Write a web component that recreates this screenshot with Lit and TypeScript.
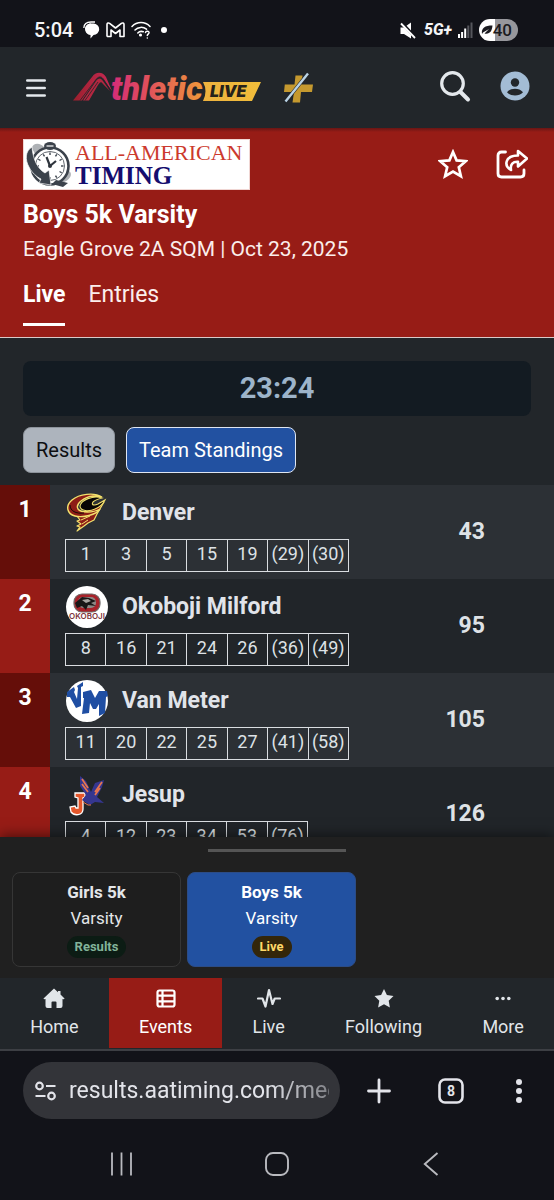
import { LitElement, html, css, svg } from "lit";
import { customElement, state } from "lit/decorators.js";

interface Team {
  rank: number;
  name: string;
  places: string[];
  score: number;
}

const TEAMS: Team[] = [
  { rank: 1, name: "Denver", places: ["1", "3", "5", "15", "19", "(29)", "(30)"], score: 43 },
  { rank: 2, name: "Okoboji Milford", places: ["8", "16", "21", "24", "26", "(36)", "(49)"], score: 95 },
  { rank: 3, name: "Van Meter", places: ["11", "20", "22", "25", "27", "(41)", "(58)"], score: 105 },
  { rank: 4, name: "Jesup", places: ["4", "12", "23", "34", "53", "(76)"], score: 126 },
];

const CELL = 40.5;

const logos: Record<string, unknown> = {
  Denver: svg`
    <path d="M11 24 L14 28 L11 29 L15 32 L11 34 L14 35 L11 39 L18 34 L22 31 L28 28 L31 22 L38 10 L28 16 Z" fill="#8d1d16" stroke="#f3e06c" stroke-width="1.2" stroke-linejoin="round"/>
    <path d="M36 5 C28 0 13 2 6 8 C-1 14 1 22 9 24 C17 26 30 23 34 17 C27 21 15 21 12 17 C9 12 18 5 27 4 C30 4 33 4 36 5 Z" fill="#8d1d16" stroke="#f3e06c" stroke-width="1.4"/>
    <path d="M36 6 C27 3 15 8 14 14 C14 19 23 20 29 17 C34 15 37 12 39 8 L32 12 C28 14 25 13 27 10 C29 8 32 7 36 6 Z" fill="#080404" stroke="#f3e06c" stroke-width="1.1"/>
    <path d="M4 13 C4 19 10 22 18 21" fill="none" stroke="#1b0a06" stroke-width="1"/>
    <path d="M15 28 L24 24 M16 32 L22 28" stroke="#f3e06c" stroke-width="1"/>`,
  "Okoboji Milford": svg`
    <circle cx="21" cy="21" r="21" fill="#fff"/>
    <rect x="8" y="8" width="26" height="18" rx="8" fill="#a8222a" stroke="#6f6a68" stroke-width="1.2"/>
    <rect x="12" y="11" width="18" height="11" rx="5" fill="#8d8885"/>
    <path d="M9 17 L16 11 L23 12 L30 15 L25 17 L30 20 L22 19 L20 24 L16 20 L11 22 Z" fill="#191616"/>
    <path d="M16 14 L22 13 L25 15 L20 17Z" fill="#a8a4a0"/>
    <text x="21" y="33" text-anchor="middle" font-family="Inter, sans-serif" font-size="8" font-weight="600" fill="#7d333a">OKOBOJI</text>`,
  "Van Meter": svg`
    <circle cx="21" cy="21" r="21" fill="#fff"/>
    <path d="M1 12 L8 7 L9 10 L8 12 L11 19 L12 8 L11 6 L17 2 L17 6 L15 7 L15 26 L10 28 L4 17 L1 17 Z" fill="#1f4ea3"/>
    <path d="M17 12 L25 10 L29 18 L33 11 L41 11 L42 16 L40 17 L39 33 L33 36 L33 24 L30 29 L27 29 L24 23 L23 33 L16 34 L18 18 L17 18 Z" fill="#1f4ea3"/>`,
  Jesup: svg`
    <path d="M9 19 L19 19 L19 23 L17 24 L17 35 C17 42 8 42 5 38 L4 33 L9 32 L10 34 L12 34 L12 24 L9 23 Z" fill="#e4572b" stroke="#fff" stroke-width="1.300"/>
    <path d="M14 2 L20 7 L25 18 L29 9 L38 6 L36 13 L31 23 L38 29 L29 28 L24 31 L19 28 L16 26 L20 21 L14 12 Z" fill="#35368f"/>
    <path d="M16 5 L22 14 M36 8 L29 18 M16 10 L22 18 M34 14 L29 21" stroke="#e8764f" stroke-width="1.700"/>
    <path d="M17 28 L22 31 L25 31" fill="none" stroke="#e8764f"/>`,
};

@customElement("team-logo")
class TeamLogo extends LitElement {
  static properties = { name: {} };
  declare name: string;
  static styles = css`
    :host { display: block; width: 42px; height: 42px; flex: none; }
    svg { display: block; width: 100%; height: 100%; }
  `;
  render() {
    return html`<svg viewBox="0 0 42 42" aria-hidden="true">${logos[this.name]}</svg>`;
  }
}

@customElement("status-bar")
class StatusBar extends LitElement {
  static styles = css`
    :host { display: flex; align-items: center; height: 47px; padding: 13px 36px 0 34px; box-sizing: border-box; color: #f4f5f7; }
    svg { display: block; flex: none; }
    .time { font-size: 20px; font-weight: 500; line-height: 24px; margin-right: 10px; }
    .icons { display: flex; align-items: center; gap: 6px; flex: 1; }
    .dot { width: 6px; height: 6px; border-radius: 50%; background: #fff; margin-left: 4px; }
    .net { font-size: 16px; font-weight: 800; font-style: italic; line-height: 20px; margin: 0 6px 0 8px; }
    .battery { display: flex; align-items: center; justify-content: flex-end; width: 39px; height: 22px; margin-left: 6px; border-radius: 11px; background: linear-gradient(90deg, #fff 40%, #97979c 40%); color: #1b1b20; font-size: 17px; font-weight: 500; padding: 0 6px 0 3px; box-sizing: border-box; }
  `;
  render() {
    return html`
      <span class="time">5:04</span>
      <div class="icons">
        <svg width="17" height="18" viewBox="0 0 17 18"><path d="M7.500 2.500h3a5.700 5.700 0 0 1 0 11.400L7.500 17.500V14A5.800 5.800 0 0 1 7.500 2.500Z" fill="#fff"/><path d="M7 13.500C4 12.500 2 10.500 2 7.800S4.500 2.500 8 2.500Z" fill="#fff"/><path d="M.8 7C1 3 4 1 8 1h4" fill="none" stroke="#fff" stroke-width="1.300"/></svg>
        <svg width="19" height="16" viewBox="0 0 19 16"><path d="M1 14V2.500C1 1 2.500.6 3.600 1.400L9.500 6l5.900-4.600C16.500.6 18 1 18 2.500V14.500h-4V8l-4.500 3.500L5 8v6.500H1.500Z" fill="none" stroke="#fff" stroke-width="1.600" stroke-linejoin="round"/></svg>
        <svg width="20" height="18" viewBox="0 0 20 18" fill="none" stroke="#fff" stroke-width="1.500" stroke-linecap="round"><path d="M1 5.500C6 .2 14 .2 19 5.500M4 9c3-3.200 8-3.500 11.500-.8M6.800 12c1.500-1.600 3.500-2 5.500-1.200"/><circle cx="9.500" cy="14" r=".8"/><path d="M14.500 11.500c.3-2 3.800-1.700 3.500.4-.2 1.200-1.700 1.300-1.700 2.600M16.300 17v.1"/></svg>
        <i class="dot"></i>
      </div>
      <svg width="16" height="17" viewBox="0 0 16 17"><path d="M.5 5.500h3.500L11 .5v16L4 12H.5Z" fill="#fff"/><path d="M1 0l15 16" stroke="#121319" stroke-width="3"/><path d="M1 1.500l14 14.500" stroke="#fff" stroke-width="1.800"/></svg>
      <span class="net">5G+</span>
      <svg width="15" height="16" viewBox="0 0 15 16"><path d="M0 12h2v4H0ZM3.100 10h2v6h-2ZM6.200 6.500h2V16h-2Z" fill="#fff"/><path d="M9.300 3.500h2V16h-2ZM12.500.5h2V16h-2Z" fill="#55565c"/></svg>
      <span class="battery"><svg width="12" height="10" viewBox="0 0 12 10"><path d="M1 9C0 3 4 .5 11.500.5 11 6 9 9.500 3.500 8.500L8 4 2 7.500Z" fill="#1b1b20"/></svg>40</span>
    `;
  }
}

@customElement("site-header")
class SiteHeader extends LitElement {
  static styles = css`
    :host { display: flex; align-items: center; height: 81px; padding: 0 24px 0 23px; box-sizing: border-box; background: #22262a; }
    button, a { display: flex; align-items: center; justify-content: center; border: 0; padding: 0; background: none; color: #e4e8ec; }
    svg { display: block; overflow: visible; }
    .menu { width: 26px; height: 32px; }
    .brand { margin-left: 23px; }
    .plus { margin-left: 19px; }
    .grow { flex: 1; }
    .tools { display: flex; align-items: center; gap: 29px; padding-bottom: 3px; }
  `;
  render() {
    return html`
      <button class="menu" aria-label="Menu"><svg width="20" height="18" viewBox="0 0 20 18" stroke="currentColor" stroke-width="2.600" stroke-linecap="round"><path d="M1.300 1.500h17.400M1.300 9h17.400M1.300 16.500h17.400"/></svg></button>
      <a class="brand" href="#" aria-label="AthleticLIVE">
        <svg width="192" height="34" viewBox="0 0 192 34">
          <defs>
            <linearGradient id="word" gradientUnits="userSpaceOnUse" x1="38" y1="0" x2="132" y2="0"><stop offset="0" stop-color="#d42a79"/><stop offset=".4" stop-color="#e0505c"/><stop offset="1" stop-color="#f09a3a"/></linearGradient>
            <linearGradient id="tag" x1="0" y1="0" x2="1" y2="0"><stop offset="0" stop-color="#eeb23f"/><stop offset="1" stop-color="#f0bd3a"/></linearGradient>
            <linearGradient id="peak" x1="0" y1="0" x2="1" y2="0"><stop offset="0" stop-color="#9a1f2c"/><stop offset="1" stop-color="#c92a55"/></linearGradient>
          </defs>
          <path d="M1 29.500 L20 6 C24 0 31 1 34 6 L40 20 L32 9 C29 5 27 5 24 8.500 L10 29.500 Z" fill="url(#peak)"/>
          <path d="M11 29.500 L24 10 C27 6.500 29 7 31 10 L38 20 L31 13 C29 10 28 11 26 14 L17 29.500 Z" fill="#b32740"/>
          <path d="M8 29.500 L24 8.500 C27 4.500 30 5.500 32 9 L39 20M13 29.500 L26 11" fill="none" stroke="#22262a" stroke-width=".8"/>
          <text x="39" y="29" font-family="Roboto, sans-serif" font-size="33" font-weight="900" font-style="italic" fill="url(#word)">thletic</text>
          <path d="M131 11 H189 L180 30 H131 Q136 20 131 11Z" fill="url(#tag)"/>
          <text x="138" y="26" font-family="Inter, sans-serif" font-size="16" font-weight="900" font-style="italic" fill="#26221a">LIVE</text>
        </svg>
      </a>
      <a class="plus" href="#" aria-label="Plus"><svg width="30" height="32" viewBox="0 0 30 32"><path d="M12.500 3.500H19.500l-1 9H30l-1 7.500H18l-1 10.500H9.500L11 20H1l.8-7.500h9.700Z" fill="#c5992f"/><path d="M24.500 2 3 29" stroke="#22262a" stroke-width="3.600"/><path d="M25 1.500 2.500 29.500" stroke="#b9d3e6" stroke-width="2.400"/></svg></a>
      <span class="grow"></span>
      <div class="tools">
        <button aria-label="Search"><svg width="32" height="32" viewBox="0 0 32 32" fill="none" stroke="currentColor" stroke-width="3.200"><circle cx="13.500" cy="13.500" r="10.800"/><path d="M21.500 22l7.500 7.500" stroke-width="4" stroke-linecap="round"/></svg></button>
        <button aria-label="Account"><svg width="30" height="30" viewBox="0 0 30 30"><circle cx="15" cy="15" r="14.500" fill="#a3bcd5"/><circle cx="15" cy="11.500" r="4.200" fill="#22262a"/><path d="M7 21.300C9 18.600 12 17.700 15 17.700s6 .9 8 3.600c-2 2.400-5 3.200-8 3.200s-6-.8-8-3.200Z" fill="#22262a"/></svg></button>
      </div>
    `;
  }
}

@customElement("event-banner")
class EventBanner extends LitElement {
  static styles = css`
    :host { display: block; padding: 11px 23px 0; background: linear-gradient(#681614, #971c16 4px); border-bottom: 1px solid #d9c9c8; color: #fff; }
    svg { display: block; }
    .top { display: flex; justify-content: space-between; align-items: center; }
    .actions { display: flex; gap: 28px; margin-right: 3px; padding-bottom: 2px; }
    button { display: block; border: 0; padding: 0; background: none; color: #fff; }
    h1 { margin: 10px 0 0; font-size: 25px; line-height: 30px; font-weight: 700; }
    p { margin: 5px 0 0; font-size: 21px; line-height: 29px; color: #fbeeec; }
    nav { display: flex; gap: 23px; margin-top: 14px; }
    nav a { display: block; padding: 3px 0 14px; font-size: 23px; line-height: 28px; color: #fbeeec; text-decoration: none; border-bottom: 3px solid transparent; margin-bottom: 11px; }
    nav .on { font-weight: 700; color: #fff; border-color: #fff; }
  `;
  render() {
    const ticks = Array.from({ length: 12 }, (_, i) => svg`<path d="M28 14.500v2.500" transform="rotate(${i * 30} 28 28)" stroke="#3b424b" stroke-width="1.400"/>`);
    return html`
      <div class="top">
        <svg width="227" height="51" viewBox="0 0 227 51" role="img" aria-label="All-American Timing">
          <rect width="227" height="51" fill="#fff"/>
          <rect x=".5" y=".5" width="226" height="50" fill="none" stroke="#f0d6d3"/>
          <path d="M9 9 C10 3 18 4 21 8 L12 15Z M38 44 C48 42 50 34 46 32 L38 38Z" fill="#aeb1b5"/>
          <g transform="translate(-1 -1)">
            <circle cx="28" cy="28" r="18.500" fill="#fff" stroke="#3b424b" stroke-width="2.600"/>
            <circle cx="28" cy="28" r="14.500" fill="#fff" stroke="#3b424b" stroke-width=".8"/>
            ${ticks}
            <path d="M28 28 24.500 19M28 28l6-5" stroke="#2f353d" stroke-width="2.200"/>
            <circle cx="28" cy="28" r="2" fill="#2f353d"/>
            <ellipse cx="28" cy="8" rx="6" ry="4" fill="#3b424b"/>
            <path d="M24.500 8h7" stroke="#fff" stroke-width="1.200"/>
            <path d="M10 9 C3 13 3 22 7 29 C10 35 15 39 19 41 L17 45 L29 47 L27 32 L23 35 C16 31 11 22 10 9Z" fill="#3b424b" stroke="#fff" stroke-width=".7"/>
            <path d="M30 46 L34 42 L46 45 L41 49Z" fill="#3b424b"/>
          </g>
          <text x="52" y="21" font-family="Liberation Serif, serif" font-size="22" fill="#cc3a2d">ALL-AMERICAN</text>
          <text x="52" y="45" font-family="Liberation Serif, serif" font-size="25" font-weight="700" fill="#150d6e">TIMING</text>
        </svg>
        <div class="actions">
          <button aria-label="Follow"><svg width="30" height="30" viewBox="0 0 30 30"><path d="M15 3l3.600 8.400 9.200.8-7 6 2.100 9L15 22.500l-7.900 4.700 2.100-9-7-6 9.200-.8Z" fill="none" stroke="currentColor" stroke-width="2.700"/></svg></button>
          <button aria-label="Share"><svg width="32" height="30" viewBox="0 0 32 30" fill="none" stroke="currentColor" stroke-width="2.800" stroke-linejoin="round" stroke-linecap="round"><path d="M9.500 3H5.500Q2 3 2 6.500V24.500Q2 28 5.500 28H24.500Q28 28 28 24.500V21"/><path d="M22 2 31 9.500 22 17.500V12.800C17 12.500 14 15 15 21 7.500 16.500 9 6.500 22 6.500Z" stroke-width="2.600"/></svg></button>
        </div>
      </div>
      <h1>Boys 5k Varsity</h1>
      <p>Eagle Grove 2A SQM | Oct 23, 2025</p>
      <nav><a class="on" href="#live" aria-current="page">Live</a><a href="#entries">Entries</a></nav>
    `;
  }
}

@customElement("team-standings")
class TeamStandings extends LitElement {
  static styles = css`
    :host { display: block; }
    table { border-collapse: collapse; }
    .board { width: 100%; }
    .board > tbody > tr { background: #212529; }
    .board > tbody > tr:nth-child(odd) { background: #2c3035; }
    .rank { width: 50px; padding: 12px 0 0; vertical-align: top; background: #971c16; color: #fff; font-size: 23px; line-height: 26px; font-weight: 700; text-align: center; }
    tr:nth-child(odd) > .rank { background: #650e09; }
    .team { padding: 7px 0 7px 15px; }
    .head { display: flex; align-items: center; gap: 14px; margin-bottom: 5px; }
    .head team-logo { margin-left: 1px; }
    .name { font-size: 23px; line-height: 28px; font-weight: 700; color: #e1e4ea; }
    .places { table-layout: fixed; }
    .places td { height: 32px; padding: 0 0 3px; border: 1px solid #dadde1; box-sizing: border-box; text-align: center; font-size: 18px; line-height: 24px; color: #dee2e6; }
    .score { padding: 0 69px 0 0; text-align: right; font-size: 23px; line-height: 28px; font-weight: 700; color: #dee2e6; }
  `;
  render() {
    return html`
      <table class="board">
        <tbody>
          ${TEAMS.map((t) => html`
            <tr>
              <th class="rank" scope="row">${t.rank}</th>
              <td class="team">
                <div class="head"><team-logo .name=${t.name}></team-logo><span class="name">${t.name}</span></div>
                <table class="places" style="width:${Math.round(t.places.length * CELL)}px">
                  <tbody><tr>${t.places.map((p) => html`<td>${p}</td>`)}</tr></tbody>
                </table>
              </td>
              <td class="score">${t.score}</td>
            </tr>`)}
        </tbody>
      </table>
    `;
  }
}

@customElement("event-sheet")
class EventSheet extends LitElement {
  static styles = css`
    :host { display: block; position: relative; padding: 12px 12px 11px; background: #202020; box-shadow: 0 -2px 12px rgba(0, 0, 0, 0.5); }
    .handle { width: 26%; height: 3px; margin: 0 auto 20px; background: #555; }
    .cards { display: grid; grid-template-columns: repeat(auto-fill, 169px); gap: 6px; }
    button { display: flex; flex-direction: column; align-items: center; height: 95px; padding: 6px 0 0; border: 1px solid #363636; border-radius: 8px; background: #1e1e1e; color: #e4e6e9; font: inherit; font-size: 17px; line-height: 26px; }
    .on { background: #2251a1; border-color: #2c4c86; color: #fff; }
    b { font-weight: 700; }
    .tag { margin-top: 5px; padding: 0 8px; border-radius: 12px; background: #0c1c14; color: #82b399; font-size: 13px; line-height: 22px; font-weight: 700; }
    .on .tag { background: #33260a; color: #ffd968; }
  `;
  render() {
    return html`
      <div class="handle"></div>
      <div class="cards">
        <button><b>Girls 5k</b><span>Varsity</span><span class="tag">Results</span></button>
        <button class="on" aria-pressed="true"><b>Boys 5k</b><span>Varsity</span><span class="tag">Live</span></button>
      </div>
    `;
  }
}

@customElement("tab-nav")
class TabNav extends LitElement {
  static styles = css`
    :host { display: block; position: relative; background: #22262a; border-bottom: 2px solid #3d3f44; padding-bottom: 1px; }
    nav { display: flex; }
    a { display: flex; flex: 1 1 auto; flex-direction: column; align-items: center; gap: 5px; padding: 10px 0 8px; color: #e1e5e9; text-decoration: none; font-size: 18px; line-height: 26px; }
    .on { background: #971c16; color: #fff; }
    svg { display: block; height: 21px; width: 24px; }
  `;
  render() {
    return html`
      <nav>
        <a href="#home"><svg viewBox="0 0 24 21" fill="currentColor"><path d="M12 .5 1.500 10.500Q1.500 11.500 3.500 11V18q0 2 2 2H9.500V14.500q0-1 1-1h3q1 0 1 1V20H18.500q2 0 2-2V11q2 .5 2-.5L18.500 6.500V3h-2.500V4.300Z"/></svg>Home</a>
        <a class="on" href="#events" aria-current="page"><svg viewBox="0 0 24 21" fill="none" stroke="currentColor" stroke-width="2.200"><rect x="3.500" y="2.500" width="17" height="16" rx="2"/><path d="M3.500 7.700h17M3.500 13.300h17M8.500 2.500v16"/></svg>Events</a>
        <a href="#live"><svg viewBox="0 0 24 21" fill="none" stroke="currentColor" stroke-width="2.200" stroke-linejoin="round" stroke-linecap="round"><path d="M1 10.500h4.500L8.500 18.500 12 2l3.500 14 2.200-5.500H23"/></svg>Live</a>
        <a href="#following"><svg viewBox="0 0 24 21" fill="currentColor"><path d="M12 1l2.900 6.100 6.600.9-4.800 4.700 1.200 6.800L12 16.200 6.100 19.500l1.200-6.800L2.500 8l6.600-.9Z"/></svg>Following</a>
        <a href="#more"><svg viewBox="0 0 24 21" fill="currentColor"><circle cx="6.200" cy="10.500" r="1.800"/><circle cx="12" cy="10.500" r="1.800"/><circle cx="17.800" cy="10.500" r="1.800"/></svg>More</a>
      </nav>
    `;
  }
}

@customElement("browser-bar")
class BrowserBar extends LitElement {
  static styles = css`
    :host { display: block; padding: 11px 23px 23px; color: #e3e4ea; }
    svg { display: block; flex: none; }
    button { display: flex; border: 0; padding: 0; background: none; color: inherit; }
    .row { display: flex; align-items: center; justify-content: space-between; }
    .url { display: flex; align-items: center; gap: 11px; flex: 0 1 317px; min-width: 0; height: 57px; padding: 0 11px; border-radius: 29px; background: #333439; box-sizing: border-box; }
    input { flex: 1; min-width: 0; height: 36px; border: 0; padding: 0; outline: 0; background: none; color: inherit; font: inherit; font-size: 23px; mask-image: linear-gradient(90deg, #000 76%, rgba(0, 0, 0, 0.45)); }
    .tools { display: flex; align-items: center; gap: 46px; margin-right: 8px; }
    .more { margin-left: 4px; }
    .system { display: flex; justify-content: space-between; padding: 32px 92px 0 88px; color: #b9babf; }
    .count { font: 700 14px Roboto, sans-serif; }
  `;
  render() {
    return html`
      <div class="row">
        <div class="url">
          <svg width="24" height="22" viewBox="0 0 24 22" fill="none" stroke="currentColor" stroke-width="2.200"><circle cx="5.500" cy="6" r="3.300"/><path d="M12 6H21.500M1.500 16H11.500"/><circle cx="17.500" cy="16" r="3.300"/></svg>
          <input aria-label="Address" value="results.aatiming.com/meets" />
        </div>
        <div class="tools">
          <button aria-label="New tab"><svg width="24" height="26" viewBox="0 0 24 26" stroke="currentColor" stroke-width="2.800" stroke-linecap="round"><path d="M12 2v22M1.500 13h21"/></svg></button>
          <button aria-label="Tabs"><svg width="28" height="28" viewBox="0 0 28 28"><rect x="2.500" y="2.500" width="23" height="23" rx="5.500" fill="none" stroke="currentColor" stroke-width="2.600"/><text class="count" x="14" y="19" text-anchor="middle" fill="currentColor">8</text></svg></button>
          <button class="more" aria-label="Menu"><svg width="8" height="28" viewBox="0 0 8 28" fill="currentColor"><circle cx="4" cy="5" r="3"/><circle cx="4" cy="14" r="3"/><circle cx="4" cy="23" r="3"/></svg></button>
        </div>
      </div>
      <div class="system">
        <button aria-label="Recents"><svg width="22" height="26" viewBox="0 0 22 26" stroke="currentColor" stroke-width="1.800"><path d="M1 1.500v23M10.500 1.500v23M20 1.500v23"/></svg></button>
        <button aria-label="Home"><svg width="26" height="26" viewBox="0 0 26 26" fill="none" stroke="currentColor" stroke-width="1.900"><rect x="1" y="2" width="22" height="22" rx="7"/></svg></button>
        <button aria-label="Back"><svg width="16" height="26" viewBox="0 0 16 26" fill="none" stroke="currentColor" stroke-width="1.900"><path d="M14.500 2 1.800 13l12.700 11"/></svg></button>
      </div>
    `;
  }
}

@customElement("app-root")
class AppRoot extends LitElement {
  @state() view = "teams";

  static styles = css`
    :host { display: flex; flex-direction: column; height: 100vh; background: #121319; font-family: Roboto, "Noto Sans", sans-serif; }
    main { flex: 1; min-height: 0; overflow: hidden; background: #22262a; }
    .clock { margin: 23px 23px 11px; border-radius: 8px; background: #131b22; color: #9db4ca; text-align: center; font-size: 29px; font-weight: 700; line-height: 55px; }
    .views { display: flex; gap: 11px; margin: 0 23px 12px; }
    .views button { height: 46px; padding: 0 12px; border: 1px solid #8d939b; border-radius: 8px; background: #adb4bd; color: #0d0f12; font: inherit; font-size: 20px; }
    .views .on { background: #2251a1; border-color: #dfe6f2; color: #fff; }
  `;

  render() {
    return html`
      <status-bar></status-bar>
      <site-header></site-header>
      <event-banner></event-banner>
      <main>
        <div class="clock">23:24</div>
        <div class="views">
          <button class=${this.view === "results" ? "on" : ""} @click=${() => (this.view = "results")}>Results</button>
          <button class=${this.view === "teams" ? "on" : ""} @click=${() => (this.view = "teams")}>Team Standings</button>
        </div>
        <team-standings></team-standings>
      </main>
      <event-sheet></event-sheet>
      <tab-nav></tab-nav>
      <browser-bar></browser-bar>
    `;
  }
}
